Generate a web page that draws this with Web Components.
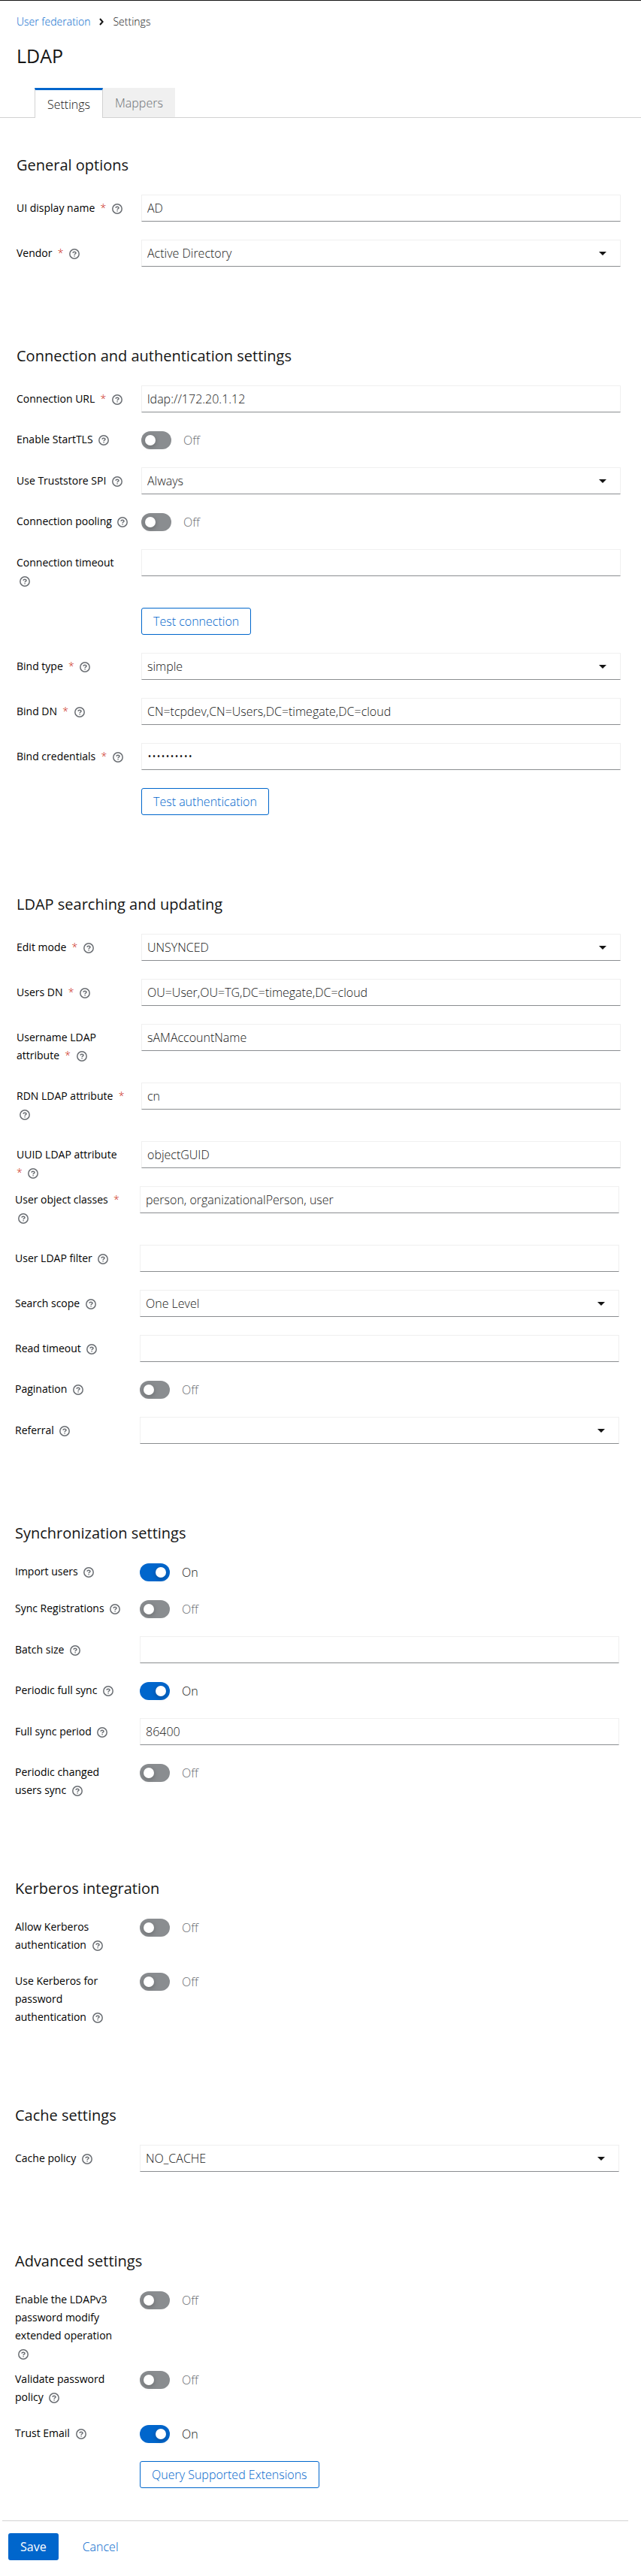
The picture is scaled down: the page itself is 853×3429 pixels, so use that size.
<!DOCTYPE html>
<html lang="en">
<head>
<meta charset="utf-8">
<meta name="viewport" content="width=device-width, initial-scale=1">
<title>LDAP - User federation</title>
<style>
  body {
    margin: 0;
    background: #fff;
    color: #151515;
    font-family: "Open Sans", "Noto Sans", sans-serif;
    font-size: 16px;
    line-height: 24px;
  }
</style>
</head>
<body>
<user-federation-page>
  <crumb-trail slot="crumbs" parent="User federation" current="Settings"></crumb-trail>
  <span slot="title">LDAP</span>
  <page-tabs slot="tabs" items="Settings,Mappers"></page-tabs>

  <settings-section heading="General options" first>
    <form-row label="UI display name" required type="text" value="AD"></form-row>
    <form-row label="Vendor" required type="select" value="Active Directory"></form-row>
  </settings-section>

  <settings-section heading="Connection and authentication settings">
    <form-row label="Connection URL" required type="text" value="ldap://172.20.1.12"></form-row>
    <form-row label="Enable StartTLS" type="switch"></form-row>
    <form-row label="Use Truststore SPI" type="select" value="Always"></form-row>
    <form-row label="Connection pooling" type="switch"></form-row>
    <form-row label="Connection timeout" break-help type="text"></form-row>
    <form-row type="button" value="Test connection"></form-row>
    <form-row label="Bind type" required type="select" value="simple"></form-row>
    <form-row label="Bind DN" required type="text" value="CN=tcpdev,CN=Users,DC=timegate,DC=cloud"></form-row>
    <form-row label="Bind credentials" required type="password" value="0123456789"></form-row>
    <form-row type="button" value="Test authentication"></form-row>
  </settings-section>

  <settings-section heading="LDAP searching and updating">
    <form-row label="Edit mode" required type="select" value="UNSYNCED"></form-row>
    <form-row label="Users DN" required type="text" value="OU=User,OU=TG,DC=timegate,DC=cloud"></form-row>
    <form-row label="Username LDAP&#10;attribute" required type="text" value="sAMAccountName"></form-row>
    <form-row label="RDN LDAP attribute" required break-help type="text" value="cn"></form-row>
    <form-row label="UUID LDAP attribute&#10;" required type="text" value="objectGUID" gap="tight"></form-row>
  </settings-section>

  <settings-section wide>
    <form-row label="User object classes" required break-help type="text" value="person, organizationalPerson, user"></form-row>
    <form-row label="User LDAP filter" type="text"></form-row>
    <form-row label="Search scope" type="select" value="One Level"></form-row>
    <form-row label="Read timeout" type="text"></form-row>
    <form-row label="Pagination" type="switch"></form-row>
    <form-row label="Referral" type="select"></form-row>
  </settings-section>

  <settings-section heading="Synchronization settings" wide>
    <form-row label="Import users" type="switch" checked></form-row>
    <form-row label="Sync Registrations" type="switch"></form-row>
    <form-row label="Batch size" type="text"></form-row>
    <form-row label="Periodic full sync" type="switch" checked></form-row>
    <form-row label="Full sync period" type="text" value="86400"></form-row>
    <form-row label="Periodic changed&#10;users sync" type="switch"></form-row>
  </settings-section>

  <settings-section heading="Kerberos integration" wide>
    <form-row label="Allow Kerberos&#10;authentication" type="switch"></form-row>
    <form-row label="Use Kerberos for&#10;password&#10;authentication" type="switch"></form-row>
  </settings-section>

  <settings-section heading="Cache settings" wide>
    <form-row label="Cache policy" type="select" value="NO_CACHE"></form-row>
  </settings-section>

  <settings-section heading="Advanced settings" wide>
    <form-row label="Enable the LDAPv3&#10;password modify&#10;extended operation" break-help type="switch" gap="snug"></form-row>
    <form-row label="Validate password&#10;policy" type="switch"></form-row>
    <form-row label="Trust Email" type="switch" checked></form-row>
    <form-row type="button" value="Query Supported Extensions"></form-row>
  </settings-section>

  <form-actions slot="actions"></form-actions>
</user-federation-page>

<script>
const define = (name, render, wire) => customElements.define(name, class extends HTMLElement {
  connectedCallback() {
    if (this.shadowRoot) return;
    const root = this.attachShadow({ mode: 'open' });
    root.innerHTML = render(this);
    if (wire) wire(root);
  }
});

define('user-federation-page', () => `
  <style>
    :host { display: block; border-top: 1px solid #151515; }
    header { padding-top: 18px; }
    .head { padding: 0 27px 0 22px; }
    h1 { margin: 20px 0 28px; font-size: 25px; line-height: 30px; font-weight: 400; }
  </style>
  <header>
    <div class="head">
      <slot name="crumbs"></slot>
      <h1><slot name="title"></slot></h1>
    </div>
    <slot name="tabs"></slot>
  </header>
  <main><slot></slot></main>
  <slot name="actions"></slot>
`);

define('crumb-trail', el => `
  <style>
    :host { display: block; font-size: 14px; line-height: 20px; font-weight: 300; }
    ol { display: flex; align-items: center; margin: 0; padding: 0; list-style: none; }
    li { display: flex; align-items: center; }
    a { color: #06c; text-decoration: none; }
    svg { width: 6px; height: 10px; margin: 0 12px; fill: none; stroke: #151515; stroke-width: 2; }
  </style>
  <nav aria-label="Breadcrumb"><ol>
    <li><a href="#user-federation">${el.getAttribute('parent')}</a></li>
    <li><svg viewBox="0 0 6 10" aria-hidden="true"><path d="M1 1l3.6 4L1 9"/></svg>
      <span aria-current="page">${el.getAttribute('current')}</span></li>
  </ol></nav>
`);

define('page-tabs', el => `
  <style>
    :host { display: block; }
    div { display: flex; padding-left: 46px; border-bottom: 1px solid #d2d2d2; }
    button {
      font: inherit; font-weight: 300; line-height: 24px; height: 39px; margin: 0; border: 0;
      padding: 0 16px; background: #f0f0f0; color: #6a6e73;
    }
    button[aria-selected="true"] {
      height: 40px; margin-bottom: -1px; background: #fff; color: #151515;
      border: 1px solid #d2d2d2; border-top: 3px solid #06c; border-bottom: 0;
    }
  </style>
  <div role="tablist">${el.getAttribute('items').split(',').map((t, i) =>
    `<button type="button" role="tab" aria-selected="${i === 0}">${t}</button>`).join('')}</div>
`);

define('settings-section', el => `
  <style>
    :host { display: block; padding: 0 27px 0 22px; }
    :host([wide]) { padding: 0 29px 0 20px; }
    h2 { margin: 80px 0 24px; font-size: 20px; line-height: 30px; font-weight: 400; }
    :host([first]) h2 { margin-top: 48px; }
    section { display: flow-root; }
  </style>
  <section>${el.hasAttribute('heading') ? `<h2>${el.getAttribute('heading')}</h2>` : ''}<slot></slot></section>
`);

const controls = {
  text: v => `<input id="c" class="box" type="text" value="${v}">`,
  password: v => `<input id="c" class="box" type="password" value="${v}">`,
  select: v => `<div class="pick"><select id="c" class="box"><option>${v}</option></select>
    <svg viewBox="0 0 10 5" aria-hidden="true"><path d="M0 0h10L5 5z"/></svg></div>`,
  switch: (v, on) => `<div class="toggle"><input id="c" type="checkbox" role="switch" ${on ? 'checked' : ''}>
    <span class="state">${on ? 'On' : 'Off'}</span></div>`,
  button: v => `<button class="action" type="button">${v}</button>`
};

define('form-row', el => {
  const type = el.getAttribute('type');
  const label = el.getAttribute('label');
  const star = el.hasAttribute('required') ? '&nbsp; <span class="star" aria-hidden="true">*</span>' : '';
  const lead = label && label.endsWith('\n') ? star.replace('&nbsp; ', '') : star;
  const help = `<button class="help" type="button" aria-label="Help"><svg viewBox="0 0 14 14" aria-hidden="true"><circle cx="7" cy="7" r="6.2"/><path d="M5.1 5.7C5.1 3.6 9 3.6 9 5.7 9 7 7.1 6.9 7.1 8.2"/><path d="M7.1 9.2v1.4"/></svg></button>`;
  return `
  <style>
    :host { display: grid; grid-template-columns: 150px minmax(0, 1fr); column-gap: 16px; align-items: start; margin-bottom: 24px; }
    :host([gap="tight"]) { margin-bottom: 6px; }
    :host([gap="snug"]) { margin-bottom: 10px; }
    .name { font-size: 14px; line-height: 24px; font-weight: 500; color: #000; white-space: pre; padding-top: 6px; }
    :host([type="switch"]) .name { padding-top: 0; }
    .star { color: #c9190b; font-weight: 300; }
    .help { display: inline-block; width: 14px; height: 14px; margin: 0 0 0 4px; padding: 0; border: 0; background: none; vertical-align: -3px; }
    .help svg { display: block; width: 14px; height: 14px; fill: none; stroke: #6a6e73; stroke-width: 1.5; }
    .box {
      box-sizing: border-box; display: block; width: 100%; height: 36px; margin: 0; padding: 0 7px;
      border: 1px solid #f0f0f0; border-bottom-color: #8a8d90; border-radius: 0; background: #fff;
      color: #151515; font: inherit; font-weight: 300; appearance: none; outline-color: #06c;
    }
    .pick { display: grid; align-items: center; }
    .pick > * { grid-area: 1 / 1; }
    .pick svg { justify-self: end; width: 10px; height: 5px; margin-right: 19px; fill: #151515; pointer-events: none; }
    .toggle { display: flex; align-items: center; gap: 16px; padding-top: 1px; }
    .toggle input {
      appearance: none; flex: none; display: flex; align-items: center; width: 40px; height: 24px; margin: 0;
      box-sizing: border-box; padding: 0 5px; border-radius: 12px; background: #8a8d90;
    }
    .toggle input::before { content: ""; width: 14px; height: 14px; border-radius: 50%; background: #fff; box-shadow: 0 2px 6px rgba(3, 3, 3, .25); }
    .toggle input:checked { background: #06c; justify-content: flex-end; }
    .state { font-weight: 300; color: #6a6e73; }
    .toggle input:checked + .state { color: #151515; }
    .action {
      justify-self: start; grid-column: 2; height: 36px; padding: 0 15px; font: inherit; font-weight: 300;
      color: #06c; background: #fff; border: 1px solid #06c; border-radius: 3px; white-space: nowrap;
    }
  </style>
  ${label ? `<div class="name"><label for="c">${label}${lead}</label>${el.hasAttribute('break-help') ? '<br>' : ' '}${help}</div>` : ''}
  ${controls[type](el.getAttribute('value') || '', el.hasAttribute('checked'))}`;
}, root => {
  const box = root.querySelector('[role="switch"]');
  if (box) box.addEventListener('change', () => {
    root.querySelector('.state').textContent = box.checked ? 'On' : 'Off';
  });
});

define('form-actions', () => `
  <style>
    :host { display: block; margin: 19px 17px 0 3px; padding: 16px 8px 21px; border-top: 1px solid #d2d2d2; }
    div { display: flex; gap: 16px; }
    button { height: 36px; padding: 0 16px; border: 0; border-radius: 3px; font: inherit; background: #06c; color: #fff; }
    .link { background: none; color: #06c; font-weight: 300; }
  </style>
  <div>
    <button type="button">Save</button>
    <button type="button" class="link">Cancel</button>
  </div>
`);
</script>
</body>
</html>
